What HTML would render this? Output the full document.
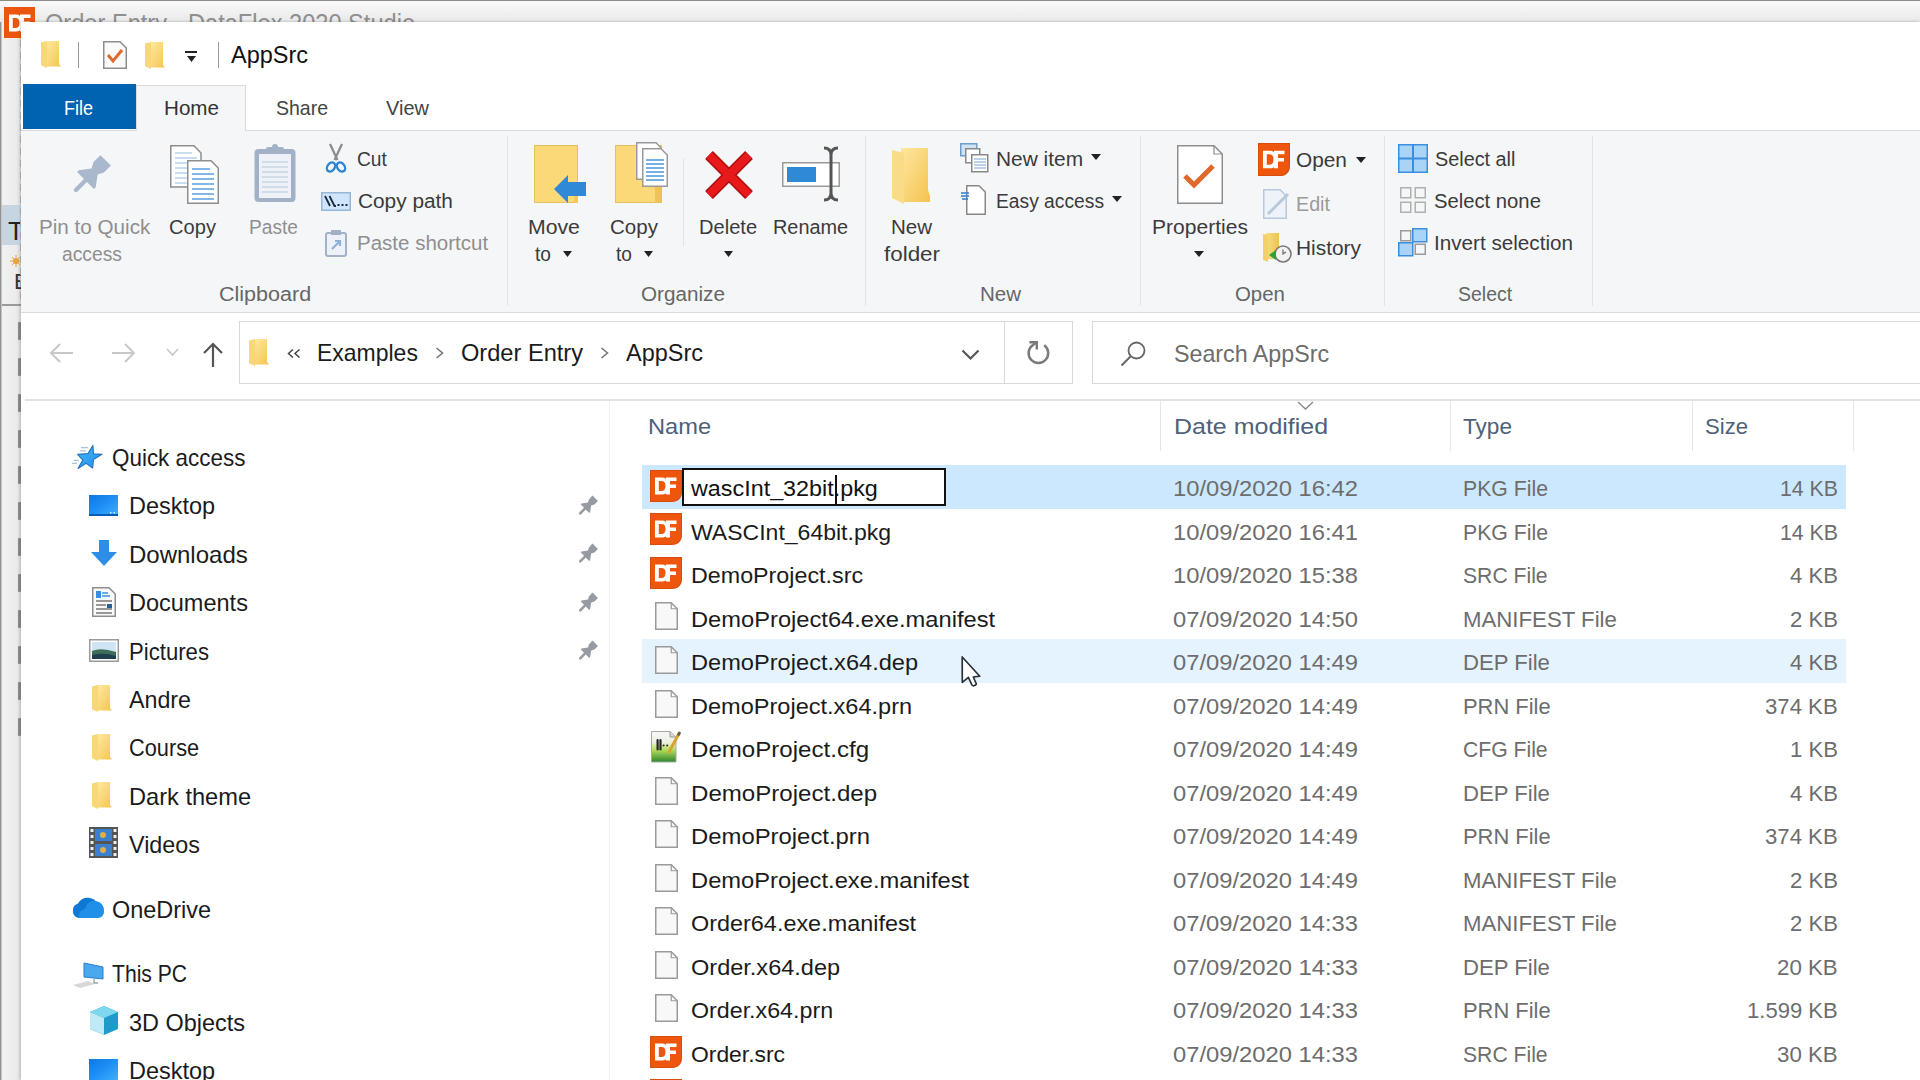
<!DOCTYPE html>
<html><head><meta charset="utf-8"><title>AppSrc</title>
<style>
html,body{margin:0;padding:0;width:1920px;height:1080px;overflow:hidden;background:#fff}
body{position:relative;font-family:"Liberation Sans",sans-serif}
.t{position:absolute;white-space:nowrap;line-height:1;transform-origin:0 0}
svg{overflow:visible}
</style></head><body>
<div style="position:absolute;left:0px;top:0px;width:1920px;height:22px;background:linear-gradient(#fafafa,#e9e9e9);border-top:1px solid #8c8c8c;box-sizing:border-box"></div>
<div class="t" style="left:45.00px;top:9.90px;font-size:26px;color:#8f8f8f;transform:scaleX(0.9080);">Order Entry - DataFlex 2020 Studio</div>
<div style="position:absolute;left:0px;top:22px;width:21px;height:1058px;background:linear-gradient(90deg,#8a8a8a 0,#9a9a9a 1px,#f1f1f3 2px,#ececec 16px,#dcdcdc 20px)"></div>
<svg style="position:absolute;left:4px;top:7px" width="31" height="31" viewBox="0 0 31 31"><rect width="31" height="31" fill="#ec550f"/><path d="M5 7.5 H12 Q16.5 7.5 17 11 V21 Q16.5 24.5 12 24.5 H5 Z M8.8 11 V21 H11.5 Q15.5 21 15.5 16 Q15.5 11 11.5 11 Z" fill="#fff" fill-rule="evenodd"/><path d="M16 7.5 H26.5 V11 H20 V14.5 H26 V18 H20 V24.5 H16 Z" fill="#fff"/></svg>
<div style="position:absolute;left:2px;top:205px;width:19px;height:40px;background:#c7d5e2"></div>
<div class="t" style="left:8.00px;top:217.90px;font-size:26px;color:#222;">T</div>
<svg style="position:absolute;left:10px;top:255px" width="11" height="12" viewBox="0 0 11 12"><circle cx="6" cy="6" r="3" fill="#e8a23a"/><path d="M6 0V12M0 6H12M2 2L10 10M10 2L2 10" stroke="#e8a23a" stroke-width="1"/></svg>
<div class="t" style="left:14.00px;top:271.30px;font-size:22px;color:#333;">E</div>
<div style="position:absolute;left:2px;top:304px;width:19px;height:2px;background:#9a9a9a"></div>
<div style="position:absolute;left:20px;top:40px;width:1px;height:7px;background:#b8b8b8"></div>
<div style="position:absolute;left:20px;top:52px;width:1px;height:7px;background:#b8b8b8"></div>
<div style="position:absolute;left:20px;top:64px;width:1px;height:7px;background:#b8b8b8"></div>
<div style="position:absolute;left:20px;top:76px;width:1px;height:7px;background:#b8b8b8"></div>
<div style="position:absolute;left:20px;top:88px;width:1px;height:7px;background:#b8b8b8"></div>
<div style="position:absolute;left:20px;top:100px;width:1px;height:7px;background:#b8b8b8"></div>
<div style="position:absolute;left:20px;top:112px;width:1px;height:7px;background:#b8b8b8"></div>
<div style="position:absolute;left:20px;top:124px;width:1px;height:7px;background:#b8b8b8"></div>
<div style="position:absolute;left:20px;top:136px;width:1px;height:7px;background:#b8b8b8"></div>
<div style="position:absolute;left:20px;top:148px;width:1px;height:7px;background:#b8b8b8"></div>
<div style="position:absolute;left:20px;top:160px;width:1px;height:7px;background:#b8b8b8"></div>
<div style="position:absolute;left:20px;top:172px;width:1px;height:7px;background:#b8b8b8"></div>
<div style="position:absolute;left:20px;top:184px;width:1px;height:7px;background:#b8b8b8"></div>
<div style="position:absolute;left:20px;top:196px;width:1px;height:7px;background:#b8b8b8"></div>
<div style="position:absolute;left:20px;top:208px;width:1px;height:7px;background:#b8b8b8"></div>
<div style="position:absolute;left:20px;top:220px;width:1px;height:7px;background:#b8b8b8"></div>
<div style="position:absolute;left:20px;top:232px;width:1px;height:7px;background:#b8b8b8"></div>
<div style="position:absolute;left:20px;top:244px;width:1px;height:7px;background:#b8b8b8"></div>
<div style="position:absolute;left:20px;top:256px;width:1px;height:7px;background:#b8b8b8"></div>
<div style="position:absolute;left:20px;top:268px;width:1px;height:7px;background:#b8b8b8"></div>
<div style="position:absolute;left:20px;top:280px;width:1px;height:7px;background:#b8b8b8"></div>
<div style="position:absolute;left:20px;top:292px;width:1px;height:7px;background:#b8b8b8"></div>
<div style="position:absolute;left:18px;top:322px;width:3px;height:18px;background:#8a8a8a;border-radius:1px"></div>
<div style="position:absolute;left:18px;top:358px;width:3px;height:18px;background:#8a8a8a;border-radius:1px"></div>
<div style="position:absolute;left:18px;top:394px;width:3px;height:18px;background:#8a8a8a;border-radius:1px"></div>
<div style="position:absolute;left:18px;top:430px;width:3px;height:18px;background:#8a8a8a;border-radius:1px"></div>
<div style="position:absolute;left:18px;top:466px;width:3px;height:18px;background:#8a8a8a;border-radius:1px"></div>
<div style="position:absolute;left:18px;top:502px;width:3px;height:18px;background:#8a8a8a;border-radius:1px"></div>
<div style="position:absolute;left:18px;top:538px;width:3px;height:18px;background:#8a8a8a;border-radius:1px"></div>
<div style="position:absolute;left:18px;top:574px;width:3px;height:18px;background:#8a8a8a;border-radius:1px"></div>
<div style="position:absolute;left:18px;top:610px;width:3px;height:18px;background:#8a8a8a;border-radius:1px"></div>
<div style="position:absolute;left:18px;top:646px;width:3px;height:18px;background:#8a8a8a;border-radius:1px"></div>
<div style="position:absolute;left:18px;top:682px;width:3px;height:18px;background:#8a8a8a;border-radius:1px"></div>
<div style="position:absolute;left:18px;top:718px;width:3px;height:18px;background:#8a8a8a;border-radius:1px"></div>
<div style="position:absolute;left:21px;top:22px;width:1899px;height:1058px;background:#fff;box-shadow:-1px -1px 2px rgba(0,0,0,0.15)"></div>
<svg style="position:absolute;left:41px;top:41px" width="20" height="27" viewBox="0 0 20 27"><defs><linearGradient id="fg41_41" x1="0" y1="0" x2="1" y2="1"><stop offset="0" stop-color="#ffe9a0"/><stop offset="1" stop-color="#f4c450"/></linearGradient></defs>
<path d="M5.0 0 H18.0 V22.9 L20.0 25.6 H5.0 Z" fill="url(#fg41_41)"/>
<path d="M0 1.4 L6.0 0 V27.0 L0 24.3 Z" fill="#f7d77a"/></svg>
<div style="position:absolute;left:78px;top:42px;width:1px;height:26px;background:#9a9a9a"></div>
<svg style="position:absolute;left:103px;top:41px" width="24" height="28" viewBox="0 0 24 28"><path d="M0.75 0.75 H17 L23.25 7 V27.25 H0.75 Z" fill="#fafafa" stroke="#8d8d8d" stroke-width="1.5"/><path d="M5 14 L10 20 L19 9" fill="none" stroke="#e0682c" stroke-width="3"/></svg>
<svg style="position:absolute;left:145px;top:42px" width="20" height="27" viewBox="0 0 20 27"><defs><linearGradient id="fg145_42" x1="0" y1="0" x2="1" y2="1"><stop offset="0" stop-color="#ffe9a0"/><stop offset="1" stop-color="#f4c450"/></linearGradient></defs>
<path d="M5.0 0 H18.0 V22.9 L20.0 25.6 H5.0 Z" fill="url(#fg145_42)"/>
<path d="M0 1.4 L6.0 0 V27.0 L0 24.3 Z" fill="#f7d77a"/></svg>
<div style="position:absolute;left:185px;top:51px;width:12px;height:2px;background:#222"></div>
<svg style="position:absolute;left:187px;top:56px" width="9" height="6" viewBox="0 0 9 6"><path d="M0 0 H9 L4.5 6 Z" fill="#222"/></svg>
<div style="position:absolute;left:218px;top:42px;width:1px;height:26px;background:#9a9a9a"></div>
<div class="t" style="left:231.00px;top:43.10px;font-size:24px;color:#111;transform:scaleX(0.9778);">AppSrc</div>
<div style="position:absolute;left:21px;top:130px;width:1899px;height:1px;background:#dadbdc"></div>
<div style="position:absolute;left:23px;top:84px;width:113px;height:45px;background:#0063b1"></div>
<div class="t" style="left:64.00px;top:97.15px;font-size:21px;color:#ffffff;transform:scaleX(0.8593);">File</div>
<div style="position:absolute;left:136px;top:85px;width:110px;height:46px;background:#f5f6f7;border:1px solid #dadbdc;border-bottom:none;box-sizing:border-box"></div>
<div class="t" style="left:164.00px;top:97.15px;font-size:21px;color:#333;transform:scaleX(0.9821);">Home</div>
<div class="t" style="left:276.00px;top:97.15px;font-size:21px;color:#444;transform:scaleX(0.9286);">Share</div>
<div class="t" style="left:386.00px;top:97.15px;font-size:21px;color:#444;transform:scaleX(0.9503);">View</div>
<div style="position:absolute;left:21px;top:131px;width:1899px;height:181px;background:#f5f6f7"></div>
<div style="position:absolute;left:21px;top:312px;width:1899px;height:1px;background:#dadbdc"></div>
<div style="position:absolute;left:507px;top:136px;width:1px;height:170px;background:#e2e3e4"></div>
<div style="position:absolute;left:865px;top:136px;width:1px;height:170px;background:#e2e3e4"></div>
<div style="position:absolute;left:1140px;top:136px;width:1px;height:170px;background:#e2e3e4"></div>
<div style="position:absolute;left:1384px;top:136px;width:1px;height:170px;background:#e2e3e4"></div>
<div style="position:absolute;left:1592px;top:136px;width:1px;height:170px;background:#e2e3e4"></div>
<div style="position:absolute;left:683px;top:158px;width:1px;height:88px;background:#e2e3e4"></div>
<div class="t" style="left:219.00px;top:284.00px;font-size:20px;color:#666666;transform:scaleX(1.0760);">Clipboard</div>
<div class="t" style="left:641.00px;top:284.00px;font-size:20px;color:#666666;transform:scaleX(1.0338);">Organize</div>
<div class="t" style="left:980.00px;top:284.00px;font-size:20px;color:#666666;transform:scaleX(1.0250);">New</div>
<div class="t" style="left:1235.00px;top:284.00px;font-size:20px;color:#666666;transform:scaleX(1.0204);">Open</div>
<div class="t" style="left:1458.00px;top:284.00px;font-size:20px;color:#666666;transform:scaleX(0.9730);">Select</div>
<svg style="position:absolute;left:72px;top:152px" width="44" height="44" viewBox="0 0 44 44"><g transform="scale(1.95)"><g transform="translate(17.25 4.3) rotate(45) translate(-10 0)"><path d="M6.2 0 H13.8 V5 L12.2 8 L16.1 13.3 V14.6 H3.9 V13.3 L7.8 8 L6.2 5 Z" fill="#a9b8cc"/><rect x="8.9" y="13" width="2.2" height="9.6" rx="1.1" fill="#a9b8cc"/></g></g></svg>
<div class="t" style="left:38.50px;top:217.00px;font-size:20px;color:#8f8f8f;transform:scaleX(1.0324);">Pin to Quick</div>
<div class="t" style="left:62.00px;top:244.00px;font-size:20px;color:#8f8f8f;transform:scaleX(0.9639);">access</div>
<svg style="position:absolute;left:170px;top:145px" width="49" height="59" viewBox="0 0 49 59"><path d="M0.75 0.75 H24 L31 8 V42 H0.75 Z" fill="#fff" stroke="#8e8e8e" stroke-width="1.5"/>
<g stroke="#b7d2ec" stroke-width="1.6"><path d="M5 8H22M5 13H27M5 18H27M5 23H27M5 28H27M5 33H27M5 38H27"/></g>
<path d="M17.75 15.75 H41 L48.25 23 V58.25 H17.75 Z" fill="#fff" stroke="#8e8e8e" stroke-width="1.5"/>
<g stroke="#5a9fe0" stroke-width="1.7"><path d="M22 24H40M22 29H44M22 34H44M22 39H44M22 44H44M22 49H44M22 54H44"/></g></svg>
<div class="t" style="left:169.00px;top:217.00px;font-size:20px;color:#3b3b3b;transform:scaleX(1.0053);">Copy</div>
<svg style="position:absolute;left:253px;top:144px" width="44" height="60" viewBox="0 0 44 60"><rect x="1.5" y="5" width="41" height="53" rx="4" fill="#a3b1c6"/><rect x="6" y="10" width="32" height="44" fill="#eef2f8"/>
<g stroke="#c9d3e2" stroke-width="1.5"><path d="M9 18H35M9 23H35M9 28H35M9 33H35M9 38H35M9 43H35M9 48H35"/></g>
<rect x="13" y="3" width="18" height="7" rx="2" fill="#a3b1c6"/><circle cx="22" cy="3" r="3" fill="#a3b1c6"/></svg>
<div class="t" style="left:249.00px;top:217.00px;font-size:20px;color:#8f8f8f;transform:scaleX(0.9561);">Paste</div>
<svg style="position:absolute;left:325px;top:144px" width="22" height="30" viewBox="0 0 22 30"><path d="M5 0 L12.5 16 M17 0 L9.5 16" stroke="#8a8a8a" stroke-width="2.2"/><ellipse cx="6" cy="23" rx="3.6" ry="5" transform="rotate(35 6 23)" fill="none" stroke="#2f86d6" stroke-width="2.4"/><ellipse cx="16" cy="23" rx="3.6" ry="5" transform="rotate(-35 16 23)" fill="none" stroke="#2f86d6" stroke-width="2.4"/></svg>
<div class="t" style="left:357.00px;top:149.40px;font-size:20px;color:#3b3b3b;transform:scaleX(0.9600);">Cut</div>
<svg style="position:absolute;left:321px;top:192px" width="30" height="19" viewBox="0 0 30 19"><rect x="0.75" y="0.75" width="28.5" height="17.5" fill="#cfe5fb" stroke="#98b6d6" stroke-width="1.5"/><path d="M4 4 L9 14 M8.5 4 L13.5 14 H15" stroke="#1b2a3a" stroke-width="1.8" fill="none"/><g fill="#1b2a3a"><rect x="16.5" y="12" width="2" height="2"/><rect x="20.5" y="12" width="2" height="2"/><rect x="24.5" y="12" width="2" height="2"/></g></svg>
<div class="t" style="left:357.60px;top:191.00px;font-size:20px;color:#3b3b3b;transform:scaleX(1.0411);">Copy path</div>
<svg style="position:absolute;left:325px;top:229px" width="22" height="28" viewBox="0 0 22 28"><rect x="1" y="4" width="20" height="23" rx="2" fill="#eef2f8" stroke="#a3b1c6" stroke-width="2"/><rect x="6" y="1" width="10" height="5" fill="#a3b1c6"/><path d="M7 20 L14 13 M10 12 H15 V17" stroke="#8fb0d8" stroke-width="2.2" fill="none"/></svg>
<div class="t" style="left:357.00px;top:233.00px;font-size:20px;color:#8f8f8f;transform:scaleX(1.0254);">Paste shortcut</div>
<svg style="position:absolute;left:534px;top:145px" width="52" height="60" viewBox="0 0 52 60"><rect x="0.5" y="0.5" width="43" height="57" fill="#fcd978" stroke="#e9c15a"/><rect x="40" y="46" width="4" height="12" fill="#f3c75d"/><path d="M20 44 L34 30 V37 H52 V51 H34 V58 Z" fill="#2f89d6"/></svg>
<div class="t" style="left:528.00px;top:217.00px;font-size:20px;color:#3b3b3b;transform:scaleX(1.0612);">Move</div>
<div class="t" style="left:535.00px;top:244.00px;font-size:20px;color:#3b3b3b;transform:scaleX(0.9552);">to</div>
<svg style="position:absolute;left:563px;top:251px" width="9" height="6" viewBox="0 0 9 6"><path d="M0 0 H9 L4.5 6 Z" fill="#222"/></svg>
<svg style="position:absolute;left:615px;top:142px" width="54" height="62" viewBox="0 0 54 62"><rect x="0.5" y="3.5" width="46" height="57" fill="#fcd978" stroke="#e9c15a"/><path d="M40 30 Q46 28 46 34 V60 H40 Z" fill="#f0c35a"/><path d="M21.75 0.75 H41 L46.25 6 V37.25 H21.75 Z" fill="#fff" stroke="#9a9a9a" stroke-width="1.5"/><path d="M27.75 6.75 H46 L52.25 13 V44.25 H27.75 Z" fill="#fff" stroke="#9a9a9a" stroke-width="1.5"/><g stroke="#4c95da" stroke-width="1.6"><path d="M31 18H49M31 22H49M31 26H49M31 30H49M31 34H49M31 38H49"/></g></svg>
<div class="t" style="left:610.00px;top:217.00px;font-size:20px;color:#3b3b3b;transform:scaleX(1.0267);">Copy</div>
<div class="t" style="left:616.00px;top:244.00px;font-size:20px;color:#3b3b3b;transform:scaleX(0.9552);">to</div>
<svg style="position:absolute;left:644px;top:251px" width="9" height="6" viewBox="0 0 9 6"><path d="M0 0 H9 L4.5 6 Z" fill="#222"/></svg>
<svg style="position:absolute;left:704px;top:150px" width="50" height="50" viewBox="0 0 50 50"><path d="M5 5 L45 45 M45 5 L5 45" stroke="#b01010" stroke-width="11"/><path d="M5 5 L45 45 M45 5 L5 45" stroke="#e8191a" stroke-width="8"/></svg>
<div class="t" style="left:699.00px;top:217.00px;font-size:20px;color:#3b3b3b;transform:scaleX(1.0043);">Delete</div>
<svg style="position:absolute;left:724px;top:251px" width="9" height="6" viewBox="0 0 9 6"><path d="M0 0 H9 L4.5 6 Z" fill="#222"/></svg>
<svg style="position:absolute;left:782px;top:147px" width="59" height="54" viewBox="0 0 59 54"><rect x="0.75" y="15.75" width="56.5" height="23.5" fill="#fff" stroke="#9a9a9a" stroke-width="1.5"/><rect x="5" y="20" width="29" height="15" fill="#2f89d6"/><path d="M42 1 Q49 1 49 8 V46 Q49 53 42 53 M56 1 Q49 1 49 8 V46 Q49 53 56 53" fill="none" stroke="#555" stroke-width="3"/></svg>
<div class="t" style="left:773.00px;top:217.00px;font-size:20px;color:#3b3b3b;transform:scaleX(0.9934);">Rename</div>
<svg style="position:absolute;left:892px;top:148px" width="38" height="56" viewBox="0 0 38 56"><defs><linearGradient id="nf" x1="0" y1="0" x2="1" y2="1"><stop offset="0" stop-color="#ffe7a0"/><stop offset="1" stop-color="#f3c34e"/></linearGradient></defs><path d="M9 0 H36 V42 L38 48 V54 H9 Z" fill="url(#nf)"/><path d="M0 2 L12 5 V56 L0 50 Z" fill="#f8dc88"/></svg>
<div class="t" style="left:891.00px;top:217.00px;font-size:20px;color:#3b3b3b;transform:scaleX(1.0250);">New</div>
<div class="t" style="left:884.00px;top:244.00px;font-size:20px;color:#3b3b3b;transform:scaleX(1.1200);">folder</div>
<svg style="position:absolute;left:960px;top:143px" width="29" height="30" viewBox="0 0 29 30"><rect x="0.75" y="0.75" width="16" height="12" fill="#cfe3f5" stroke="#6f9ccb" stroke-width="1.5"/><rect x="5.75" y="5.75" width="14" height="14" fill="#fff" stroke="#888" stroke-width="1.5"/><rect x="11.75" y="11.75" width="16" height="17" fill="#fff" stroke="#888" stroke-width="1.5"/><g stroke="#7aa4cf" stroke-width="1.2"><path d="M14 16H26M14 19H26M14 22H26M14 25H26"/></g></svg>
<div class="t" style="left:996.00px;top:149.00px;font-size:20px;color:#3b3b3b;transform:scaleX(1.0450);">New item</div>
<svg style="position:absolute;left:1091px;top:154px" width="10" height="6" viewBox="0 0 10 6"><path d="M0 0 H10 L5.0 6 Z" fill="#222"/></svg>
<svg style="position:absolute;left:960px;top:185px" width="26" height="30" viewBox="0 0 26 30"><path d="M6.75 0.75 H19 L25.25 7 V29.25 H6.75 Z" fill="#fff" stroke="#888" stroke-width="1.5"/><g stroke="#2b7fd4" stroke-width="1.5"><path d="M1 8H9M1 11H9M2 14H8"/></g></svg>
<div class="t" style="left:996.00px;top:191.00px;font-size:20px;color:#3b3b3b;transform:scaleX(0.9621);">Easy access</div>
<svg style="position:absolute;left:1112px;top:196px" width="10" height="6" viewBox="0 0 10 6"><path d="M0 0 H10 L5.0 6 Z" fill="#222"/></svg>
<svg style="position:absolute;left:1177px;top:145px" width="46" height="59" viewBox="0 0 46 59"><path d="M0.75 0.75 H37 L45.25 9 V58.25 H0.75 Z" fill="#fff" stroke="#8e8e8e" stroke-width="1.5"/><path d="M37 0.75 V9 H45.25" fill="none" stroke="#8e8e8e" stroke-width="1.2"/><path d="M8 31 L17 40 L36 21" fill="none" stroke="#e0682c" stroke-width="5"/></svg>
<div class="t" style="left:1152.00px;top:217.00px;font-size:20px;color:#3b3b3b;transform:scaleX(1.0521);">Properties</div>
<svg style="position:absolute;left:1194px;top:251px" width="10" height="6" viewBox="0 0 10 6"><path d="M0 0 H10 L5.0 6 Z" fill="#222"/></svg>
<svg style="position:absolute;left:1258px;top:143px" width="32" height="33" viewBox="0 0 32 33"><g transform="scale(1.0000 1.0312)"><path d="M0 0 H32 V21 Q32 32 21 32 H0 Z" fill="#ef560d"/><path d="M0.5 0.5 H31.5 V21 Q31.5 31.5 21 31.5 H0.5 Z" fill="none" stroke="#c8480e" stroke-width="1" opacity="0.6"/><path d="M5 7.5 H12 Q16.5 7.5 17 11 V21 Q16.5 24.5 12 24.5 H5 Z M8.8 11 V21 H11.5 Q15.5 21 15.5 16 Q15.5 11 11.5 11 Z" fill="#fff" fill-rule="evenodd"/><path d="M16 7.5 H26.5 V11 H20 V14.5 H26 V18 H20 V24.5 H16 Z" fill="#fff"/></g></svg>
<div class="t" style="left:1296.00px;top:150.00px;font-size:20px;color:#3b3b3b;transform:scaleX(1.0408);">Open</div>
<svg style="position:absolute;left:1356px;top:157px" width="10" height="6" viewBox="0 0 10 6"><path d="M0 0 H10 L5.0 6 Z" fill="#222"/></svg>
<svg style="position:absolute;left:1263px;top:189px" width="28" height="30" viewBox="0 0 28 30"><path d="M0.75 0.75 H17 L23.25 7 V29.25 H0.75 Z" fill="#eef3fa" stroke="#b8c8dc" stroke-width="1.5"/><path d="M5 25 L25 5" stroke="#b8c8dc" stroke-width="3"/></svg>
<div class="t" style="left:1296.00px;top:194.00px;font-size:20px;color:#9a9a9a;transform:scaleX(0.9855);">Edit</div>
<svg style="position:absolute;left:1263px;top:233px" width="30" height="30" viewBox="0 0 30 30"><defs><linearGradient id="hg" x1="0" y1="0" x2="1" y2="0"><stop offset="0" stop-color="#f7dc82"/><stop offset="1" stop-color="#eebf45"/></linearGradient></defs><path d="M3 0 H16 V20 L18 26 H3 Z" fill="url(#hg)"/><path d="M0 1 L5 2 V29 L0 27 Z" fill="#f3d06a"/><circle cx="20" cy="21" r="8" fill="#f2f2f2" stroke="#7a7a7a" stroke-width="1.6"/><path d="M20 16.5 V21 L23 19" stroke="#666" stroke-width="1.2" fill="none"/><path d="M6 22 L13 17 V27 Z" fill="#2aa23a"/></svg>
<div class="t" style="left:1296.00px;top:238.00px;font-size:20px;color:#3b3b3b;transform:scaleX(1.0442);">History</div>
<svg style="position:absolute;left:1398px;top:144px" width="30" height="29" viewBox="0 0 30 29"><rect x="0.75" y="0.75" width="28.5" height="27.5" fill="#a9d4f7" stroke="#3a8ee0" stroke-width="1.5"/><path d="M15 0 V29 M0 14.5 H30" stroke="#3a8ee0" stroke-width="2"/></svg>
<div class="t" style="left:1434.60px;top:149.00px;font-size:20px;color:#3b3b3b;transform:scaleX(0.9908);">Select all</div>
<svg style="position:absolute;left:1400px;top:187px" width="27" height="27" viewBox="0 0 27 27"><g fill="none" stroke="#b0b0b0" stroke-width="1.5"><rect x="0.75" y="0.75" width="10" height="10"/><rect x="15.25" y="0.75" width="10" height="10"/><rect x="0.75" y="15.25" width="10" height="10"/><rect x="15.25" y="15.25" width="10" height="10"/></g></svg>
<div class="t" style="left:1434.00px;top:191.00px;font-size:20px;color:#3b3b3b;transform:scaleX(1.0118);">Select none</div>
<svg style="position:absolute;left:1398px;top:228px" width="30" height="29" viewBox="0 0 30 29"><g fill="none" stroke="#9a9a9a" stroke-width="1.5"><rect x="2.75" y="2.75" width="10" height="10"/><rect x="17.25" y="16.25" width="10" height="10"/></g><rect x="14.75" y="0.75" width="14" height="13" fill="#a9d4f7" stroke="#3a8ee0" stroke-width="1.5"/><rect x="0.75" y="14.75" width="14" height="13" fill="#a9d4f7" stroke="#3a8ee0" stroke-width="1.5"/></svg>
<div class="t" style="left:1434.00px;top:233.00px;font-size:20px;color:#3b3b3b;transform:scaleX(1.0335);">Invert selection</div>
<svg style="position:absolute;left:49px;top:343px" width="25" height="20" viewBox="0 0 25 20"><path d="M24 10 H2 M11 1 L2 10 L11 19" fill="none" stroke="#c8c8c8" stroke-width="2"/></svg>
<svg style="position:absolute;left:111px;top:343px" width="25" height="20" viewBox="0 0 25 20"><path d="M1 10 H23 M14 1 L23 10 L14 19" fill="none" stroke="#c8c8c8" stroke-width="2"/></svg>
<svg style="position:absolute;left:166px;top:348px" width="13" height="9" viewBox="0 0 13 9"><path d="M1 1 L6.5 7 L12 1" fill="none" stroke="#c8c8c8" stroke-width="1.6"/></svg>
<svg style="position:absolute;left:203px;top:342px" width="20" height="26" viewBox="0 0 20 26"><path d="M10 25 V2 M1 11 L10 2 L19 11" fill="none" stroke="#555" stroke-width="2.2"/></svg>
<div style="position:absolute;left:239px;top:321px;width:834px;height:63px;border:1px solid #d9d9d9;box-sizing:border-box;background:#fff"></div>
<div style="position:absolute;left:1004px;top:322px;width:1px;height:61px;background:#d9d9d9"></div>
<svg style="position:absolute;left:249px;top:339px" width="20" height="27" viewBox="0 0 20 27"><defs><linearGradient id="fg249_339" x1="0" y1="0" x2="1" y2="1"><stop offset="0" stop-color="#ffe9a0"/><stop offset="1" stop-color="#f4c450"/></linearGradient></defs>
<path d="M5.0 0 H18.0 V22.9 L20.0 25.6 H5.0 Z" fill="url(#fg249_339)"/>
<path d="M0 1.4 L6.0 0 V27.0 L0 24.3 Z" fill="#f7d77a"/></svg>
<svg style="position:absolute;left:287px;top:349px" width="14" height="9" viewBox="0 0 14 9"><path d="M6 0.5 L1.5 4.5 L6 8.5 M12.5 0.5 L8 4.5 L12.5 8.5" fill="none" stroke="#444" stroke-width="1.5"/></svg>
<div class="t" style="left:317.00px;top:340.85px;font-size:24px;color:#1b1b1b;transform:scaleX(0.9573);">Examples</div>
<svg style="position:absolute;left:435px;top:347px" width="10" height="12" viewBox="0 0 10 12"><path d="M1.5 1 L7.5 6 L1.5 11" fill="none" stroke="#777" stroke-width="1.6"/></svg>
<div class="t" style="left:461.00px;top:340.85px;font-size:24px;color:#1b1b1b;transform:scaleX(0.9839);">Order Entry</div>
<svg style="position:absolute;left:600px;top:347px" width="10" height="12" viewBox="0 0 10 12"><path d="M1.5 1 L7.5 6 L1.5 11" fill="none" stroke="#777" stroke-width="1.6"/></svg>
<div class="t" style="left:626.00px;top:340.85px;font-size:24px;color:#1b1b1b;transform:scaleX(0.9778);">AppSrc</div>
<svg style="position:absolute;left:961px;top:349px" width="19" height="11" viewBox="0 0 19 11"><path d="M1.5 1.5 L9.5 9.5 L17.5 1.5" fill="none" stroke="#555" stroke-width="2.2"/></svg>
<svg style="position:absolute;left:1026px;top:341px" width="26" height="25" viewBox="0 0 26 25"><path d="M18.2 4.3 A9.8 9.8 0 1 1 6.6 4.3 L10 1.8" fill="none" stroke="#7a7a7a" stroke-width="2.5"/><path d="M3.4 1.3 H10.8 V8.6" fill="none" stroke="#7a7a7a" stroke-width="2.4"/></svg>
<div style="position:absolute;left:1092px;top:321px;width:900px;height:63px;border:1px solid #d9d9d9;box-sizing:border-box;background:#fff"></div>
<svg style="position:absolute;left:1120px;top:340px" width="27" height="27" viewBox="0 0 27 27"><circle cx="16.5" cy="10.5" r="8" fill="none" stroke="#666" stroke-width="1.8"/><path d="M10.5 16.5 L1.5 25.5" stroke="#666" stroke-width="2"/></svg>
<div class="t" style="left:1174.00px;top:341.60px;font-size:24px;color:#6d6d6d;transform:scaleX(0.9688);">Search AppSrc</div>
<div style="position:absolute;left:25px;top:399px;width:1895px;height:2px;background:#e3e3e3"></div>
<div style="position:absolute;left:609px;top:401px;width:1px;height:679px;background:#f2f2f2"></div>
<svg style="position:absolute;left:66px;top:440px" width="40" height="32" viewBox="0 0 40 32"><defs><linearGradient id="stg" x1="0" y1="0" x2="1" y2="1"><stop offset="0" stop-color="#4ab3f7"/><stop offset="1" stop-color="#1b93f0"/></linearGradient></defs><path d="M15 7.6 H22 M14 10.9 H20 M8 20.4 H13 M6 23.3 H11" stroke="#a9c4d8" stroke-width="1.2"/><path d="M26.9 5.5 L27.5 13.9 L36 14.3 L27.5 19.4 L26.6 27.9 L20.1 23.3 L12 28.5 L16.8 20.1 L11.7 14.3 L22 13.6 Z" fill="url(#stg)" stroke="#2a76bd" stroke-width="1.2" stroke-linejoin="round"/></svg>
<div class="t" style="left:112.00px;top:445.60px;font-size:24px;color:#1b1b1b;transform:scaleX(0.9345);">Quick access</div>
<svg style="position:absolute;left:89px;top:495px" width="30" height="22" viewBox="0 0 30 22"><defs><linearGradient id="dkg" x1="0" y1="0" x2="1" y2="1"><stop offset="0" stop-color="#0f78e0"/><stop offset="0.5" stop-color="#1e90f5"/><stop offset="1" stop-color="#3fb0ff"/></linearGradient></defs><rect x="0" y="0" width="29" height="21" fill="url(#dkg)"/><rect x="0" y="19" width="29" height="2" fill="#0a5cb8"/><rect x="21" y="17" width="1.5" height="1.5" fill="#cfe8ff"/><rect x="24.5" y="17" width="1.5" height="1.5" fill="#cfe8ff"/></svg>
<div class="t" style="left:129.00px;top:494.20px;font-size:24px;color:#1b1b1b;transform:scaleX(0.9773);">Desktop</div>
<svg style="position:absolute;left:90px;top:540px" width="28" height="27" viewBox="0 0 28 27"><path d="M9 0 H19 V12 H27 L14 26 L1 12 H9 Z" fill="#2d8ee8"/></svg>
<div class="t" style="left:129.00px;top:542.60px;font-size:24px;color:#1b1b1b;">Downloads</div>
<svg style="position:absolute;left:92px;top:587px" width="24" height="30" viewBox="0 0 24 30"><path d="M0.75 0.75 H17 L23.25 7 V29.25 H0.75 Z" fill="#fafafa" stroke="#8e8e8e" stroke-width="1.5"/><g stroke="#777" stroke-width="1.3"><path d="M4 14H20M4 18H14M4 22H20M4 26H20"/></g><rect x="4" y="4" width="5" height="7" fill="#3a8ee0"/><path d="M10 6H16M10 9H18" stroke="#3a8ee0" stroke-width="1.3"/><rect x="15" y="17" width="5" height="4" fill="#2a5c99"/></svg>
<div class="t" style="left:129.00px;top:591.10px;font-size:24px;color:#1b1b1b;transform:scaleX(0.9794);">Documents</div>
<svg style="position:absolute;left:89px;top:639px" width="30" height="23" viewBox="0 0 30 23"><rect x="0.75" y="0.75" width="28.5" height="21.5" fill="#fff" stroke="#9a9a9a" stroke-width="1.5"/><rect x="3" y="3" width="24" height="17" fill="#cfe4f5"/><path d="M3 12 Q12 8 27 13 V20 H3 Z" fill="#3c6e5a"/><path d="M3 16 Q15 13 27 17 V20 H3Z" fill="#1f3f4f"/></svg>
<div class="t" style="left:129.00px;top:639.60px;font-size:24px;color:#1b1b1b;transform:scaleX(0.9222);">Pictures</div>
<svg style="position:absolute;left:92px;top:685px" width="20" height="27" viewBox="0 0 20 27"><defs><linearGradient id="fg92_685" x1="0" y1="0" x2="1" y2="1"><stop offset="0" stop-color="#ffe9a0"/><stop offset="1" stop-color="#f4c450"/></linearGradient></defs>
<path d="M5.0 0 H18.0 V22.9 L20.0 25.6 H5.0 Z" fill="url(#fg92_685)"/>
<path d="M0 1.4 L6.0 0 V27.0 L0 24.3 Z" fill="#f7d77a"/></svg>
<svg style="position:absolute;left:92px;top:733.5px" width="20" height="27" viewBox="0 0 20 27"><defs><linearGradient id="fg92_733.5" x1="0" y1="0" x2="1" y2="1"><stop offset="0" stop-color="#ffe9a0"/><stop offset="1" stop-color="#f4c450"/></linearGradient></defs>
<path d="M5.0 0 H18.0 V22.9 L20.0 25.6 H5.0 Z" fill="url(#fg92_733.5)"/>
<path d="M0 1.4 L6.0 0 V27.0 L0 24.3 Z" fill="#f7d77a"/></svg>
<svg style="position:absolute;left:92px;top:782px" width="20" height="27" viewBox="0 0 20 27"><defs><linearGradient id="fg92_782" x1="0" y1="0" x2="1" y2="1"><stop offset="0" stop-color="#ffe9a0"/><stop offset="1" stop-color="#f4c450"/></linearGradient></defs>
<path d="M5.0 0 H18.0 V22.9 L20.0 25.6 H5.0 Z" fill="url(#fg92_782)"/>
<path d="M0 1.4 L6.0 0 V27.0 L0 24.3 Z" fill="#f7d77a"/></svg>
<div class="t" style="left:129.00px;top:687.60px;font-size:24px;color:#1b1b1b;transform:scaleX(0.9688);">Andre</div>
<div class="t" style="left:129.00px;top:736.10px;font-size:24px;color:#1b1b1b;transform:scaleX(0.9061);">Course</div>
<div class="t" style="left:129.00px;top:784.60px;font-size:24px;color:#1b1b1b;transform:scaleX(0.9839);">Dark theme</div>
<svg style="position:absolute;left:89px;top:827px" width="30" height="32" viewBox="0 0 30 32"><rect x="0" y="0" width="29" height="31" fill="#555"/><g fill="#eee"><rect x="1.5" y="2" width="3" height="3"/><rect x="1.5" y="8" width="3" height="3"/><rect x="1.5" y="14" width="3" height="3"/><rect x="1.5" y="20" width="3" height="3"/><rect x="1.5" y="26" width="3" height="3"/><rect x="24.5" y="2" width="3" height="3"/><rect x="24.5" y="8" width="3" height="3"/><rect x="24.5" y="14" width="3" height="3"/><rect x="24.5" y="20" width="3" height="3"/><rect x="24.5" y="26" width="3" height="3"/></g><rect x="6" y="2" width="17" height="12" fill="#3a7fd0"/><rect x="6" y="17" width="17" height="12" fill="#3a7fd0"/><circle cx="14" cy="8" r="3" fill="#e0b040"/><circle cx="14" cy="23" r="3" fill="#e0b040"/></svg>
<div class="t" style="left:129.00px;top:833.10px;font-size:24px;color:#1b1b1b;transform:scaleX(0.9726);">Videos</div>
<svg style="position:absolute;left:71px;top:896px" width="34" height="23" viewBox="0 0 34 23"><path d="M8 22 A7.5 7.5 0 0 1 7 7.5 A11 11 0 0 1 27 9 A7 7 0 0 1 26 22 Z" fill="#0f78d4"/><path d="M8 22 A7 7 0 0 1 14 13 A9 9 0 0 1 33 16 A6 6 0 0 1 27 22 Z" fill="#1f8fe8"/></svg>
<div class="t" style="left:112.00px;top:897.60px;font-size:24px;color:#1b1b1b;transform:scaleX(0.9778);">OneDrive</div>
<svg style="position:absolute;left:72px;top:961px" width="33" height="28" viewBox="0 0 33 28"><path d="M12 2 L31 6 V18 L12 16 Z" fill="#4aa8ef" stroke="#2a7fd0" stroke-width="1"/><path d="M1 24 L16 20 L23 23 L8 27 Z" fill="#d8d8d8"/><path d="M22 18 V22 H26" stroke="#9aa" stroke-width="1.5" fill="none"/></svg>
<div class="t" style="left:112.00px;top:961.60px;font-size:24px;color:#1b1b1b;transform:scaleX(0.8798);">This PC</div>
<svg style="position:absolute;left:89px;top:1006px" width="30" height="30" viewBox="0 0 30 30"><path d="M15 0 L29 6 V23 L15 29 L1 23 V6 Z" fill="#1e9bc9"/><path d="M15 0 L29 6 L15 12 L1 6 Z" fill="#7fd6ef"/><path d="M1 6 L15 12 V29 L1 23 Z" fill="#bfe9f5"/></svg>
<div class="t" style="left:129.00px;top:1010.60px;font-size:24px;color:#1b1b1b;transform:scaleX(0.9768);">3D Objects</div>
<svg style="position:absolute;left:89px;top:1059px" width="30" height="22" viewBox="0 0 30 22"><rect x="0" y="0" width="29" height="21" fill="url(#dkg)"/></svg>
<div class="t" style="left:129.00px;top:1058.60px;font-size:24px;color:#1b1b1b;transform:scaleX(0.9773);">Desktop</div>
<svg style="position:absolute;left:578px;top:494px" width="22" height="22" viewBox="0 0 22 22"><g transform="translate(17.25 4.3) rotate(45) translate(-10 0)"><path d="M6.2 0 H13.8 V5 L12.2 8 L16.1 13.3 V14.6 H3.9 V13.3 L7.8 8 L6.2 5 Z" fill="#969ba3"/><rect x="8.7" y="13" width="2.6" height="9.6" rx="1.3" fill="#969ba3"/></g></svg>
<svg style="position:absolute;left:578px;top:542.4px" width="22" height="22" viewBox="0 0 22 22"><g transform="translate(17.25 4.3) rotate(45) translate(-10 0)"><path d="M6.2 0 H13.8 V5 L12.2 8 L16.1 13.3 V14.6 H3.9 V13.3 L7.8 8 L6.2 5 Z" fill="#969ba3"/><rect x="8.7" y="13" width="2.6" height="9.6" rx="1.3" fill="#969ba3"/></g></svg>
<svg style="position:absolute;left:578px;top:590.8px" width="22" height="22" viewBox="0 0 22 22"><g transform="translate(17.25 4.3) rotate(45) translate(-10 0)"><path d="M6.2 0 H13.8 V5 L12.2 8 L16.1 13.3 V14.6 H3.9 V13.3 L7.8 8 L6.2 5 Z" fill="#969ba3"/><rect x="8.7" y="13" width="2.6" height="9.6" rx="1.3" fill="#969ba3"/></g></svg>
<svg style="position:absolute;left:578px;top:639.2px" width="22" height="22" viewBox="0 0 22 22"><g transform="translate(17.25 4.3) rotate(45) translate(-10 0)"><path d="M6.2 0 H13.8 V5 L12.2 8 L16.1 13.3 V14.6 H3.9 V13.3 L7.8 8 L6.2 5 Z" fill="#969ba3"/><rect x="8.7" y="13" width="2.6" height="9.6" rx="1.3" fill="#969ba3"/></g></svg>
<div class="t" style="left:648.00px;top:415.88px;font-size:22.5px;color:#4f6178;transform:scaleX(1.0500);">Name</div>
<div style="position:absolute;left:1160px;top:401px;width:1px;height:50px;background:#e5e5e5"></div>
<div style="position:absolute;left:1450px;top:401px;width:1px;height:50px;background:#e5e5e5"></div>
<div style="position:absolute;left:1692px;top:401px;width:1px;height:50px;background:#e5e5e5"></div>
<div style="position:absolute;left:1853px;top:401px;width:1px;height:50px;background:#e5e5e5"></div>
<svg style="position:absolute;left:1297px;top:401px" width="17" height="9" viewBox="0 0 17 9"><path d="M1 1 L8.5 8 L16 1" fill="none" stroke="#888" stroke-width="1.3"/></svg>
<div class="t" style="left:1174.00px;top:415.88px;font-size:22.5px;color:#4f6178;transform:scaleX(1.1099);">Date modified</div>
<div class="t" style="left:1463.00px;top:415.88px;font-size:22.5px;color:#4f6178;transform:scaleX(1.0051);">Type</div>
<div class="t" style="left:1705.00px;top:415.88px;font-size:22.5px;color:#4f6178;transform:scaleX(0.9829);">Size</div>
<div style="position:absolute;left:642px;top:465px;width:1204px;height:44px;background:#cce8ff"></div>
<svg style="position:absolute;left:650px;top:469.7px" width="32" height="32" viewBox="0 0 32 32"><g transform="scale(1.0000 1.0000)"><path d="M0 0 H32 V21 Q32 32 21 32 H0 Z" fill="#ef560d"/><path d="M0.5 0.5 H31.5 V21 Q31.5 31.5 21 31.5 H0.5 Z" fill="none" stroke="#c8480e" stroke-width="1" opacity="0.6"/><path d="M5 7.5 H12 Q16.5 7.5 17 11 V21 Q16.5 24.5 12 24.5 H5 Z M8.8 11 V21 H11.5 Q15.5 21 15.5 16 Q15.5 11 11.5 11 Z" fill="#fff" fill-rule="evenodd"/><path d="M16 7.5 H26.5 V11 H20 V14.5 H26 V18 H20 V24.5 H16 Z" fill="#fff"/></g></svg>
<div style="position:absolute;left:682px;top:468px;width:264px;height:38px;background:#fff;border:2px solid #111;box-sizing:border-box"></div>
<div class="t" style="left:691.26px;top:477.88px;font-size:22.5px;color:#111;transform:scaleX(1.0374);">wascInt_32bit.pkg</div>
<div style="position:absolute;left:835px;top:475px;width:1.5px;height:30px;background:#111"></div>
<div class="t" style="left:1173.00px;top:477.88px;font-size:22.5px;color:#6d6d6d;transform:scaleX(1.0556);">10/09/2020 16:42</div>
<div class="t" style="left:1463.00px;top:477.88px;font-size:22.5px;color:#6d6d6d;transform:scaleX(0.9444);">PKG File</div>
<div class="t" style="left:1780.00px;top:477.88px;font-size:22.5px;color:#6d6d6d;transform:scaleX(0.9469);">14 KB</div>
<svg style="position:absolute;left:650px;top:513.24px" width="32" height="32" viewBox="0 0 32 32"><g transform="scale(1.0000 1.0000)"><path d="M0 0 H32 V21 Q32 32 21 32 H0 Z" fill="#ef560d"/><path d="M0.5 0.5 H31.5 V21 Q31.5 31.5 21 31.5 H0.5 Z" fill="none" stroke="#c8480e" stroke-width="1" opacity="0.6"/><path d="M5 7.5 H12 Q16.5 7.5 17 11 V21 Q16.5 24.5 12 24.5 H5 Z M8.8 11 V21 H11.5 Q15.5 21 15.5 16 Q15.5 11 11.5 11 Z" fill="#fff" fill-rule="evenodd"/><path d="M16 7.5 H26.5 V11 H20 V14.5 H26 V18 H20 V24.5 H16 Z" fill="#fff"/></g></svg>
<div class="t" style="left:691.00px;top:521.88px;font-size:22.5px;color:#1b1b1b;transform:scaleX(1.0230);">WASCInt_64bit.pkg</div>
<div class="t" style="left:1173.00px;top:521.88px;font-size:22.5px;color:#6d6d6d;transform:scaleX(1.0556);">10/09/2020 16:41</div>
<div class="t" style="left:1463.00px;top:521.88px;font-size:22.5px;color:#6d6d6d;transform:scaleX(0.9444);">PKG File</div>
<div class="t" style="left:1780.00px;top:521.88px;font-size:22.5px;color:#6d6d6d;transform:scaleX(0.9469);">14 KB</div>
<svg style="position:absolute;left:650px;top:556.7800000000001px" width="32" height="32" viewBox="0 0 32 32"><g transform="scale(1.0000 1.0000)"><path d="M0 0 H32 V21 Q32 32 21 32 H0 Z" fill="#ef560d"/><path d="M0.5 0.5 H31.5 V21 Q31.5 31.5 21 31.5 H0.5 Z" fill="none" stroke="#c8480e" stroke-width="1" opacity="0.6"/><path d="M5 7.5 H12 Q16.5 7.5 17 11 V21 Q16.5 24.5 12 24.5 H5 Z M8.8 11 V21 H11.5 Q15.5 21 15.5 16 Q15.5 11 11.5 11 Z" fill="#fff" fill-rule="evenodd"/><path d="M16 7.5 H26.5 V11 H20 V14.5 H26 V18 H20 V24.5 H16 Z" fill="#fff"/></g></svg>
<div class="t" style="left:691.00px;top:564.88px;font-size:22.5px;color:#1b1b1b;transform:scaleX(1.0346);">DemoProject.src</div>
<div class="t" style="left:1173.00px;top:564.88px;font-size:22.5px;color:#6d6d6d;transform:scaleX(1.0556);">10/09/2020 15:38</div>
<div class="t" style="left:1463.00px;top:564.88px;font-size:22.5px;color:#6d6d6d;transform:scaleX(0.9400);">SRC File</div>
<div class="t" style="left:1790.10px;top:564.88px;font-size:22.5px;color:#6d6d6d;transform:scaleX(0.9826);">4 KB</div>
<svg style="position:absolute;left:655px;top:602.42px" width="23" height="28" viewBox="0 0 23 28"><path d="M0.75 0.75 H16.25 L22.25 6.75 V27.25 H0.75 Z" fill="#f8f8f8" stroke="#9a9a9a" stroke-width="1.5"/><path d="M16.25 0.75 V6.75 H22.25" fill="none" stroke="#9a9a9a" stroke-width="1.2"/></svg>
<div class="t" style="left:691.00px;top:608.88px;font-size:22.5px;color:#1b1b1b;transform:scaleX(1.0528);">DemoProject64.exe.manifest</div>
<div class="t" style="left:1173.00px;top:608.88px;font-size:22.5px;color:#6d6d6d;transform:scaleX(1.0556);">07/09/2020 14:50</div>
<div class="t" style="left:1463.00px;top:608.88px;font-size:22.5px;color:#6d6d6d;transform:scaleX(0.9875);">MANIFEST File</div>
<div class="t" style="left:1790.10px;top:608.88px;font-size:22.5px;color:#6d6d6d;transform:scaleX(0.9826);">2 KB</div>
<div style="position:absolute;left:642px;top:639px;width:1204px;height:44px;background:#e5f3ff"></div>
<svg style="position:absolute;left:655px;top:645.9599999999999px" width="23" height="28" viewBox="0 0 23 28"><path d="M0.75 0.75 H16.25 L22.25 6.75 V27.25 H0.75 Z" fill="#f8f8f8" stroke="#9a9a9a" stroke-width="1.5"/><path d="M16.25 0.75 V6.75 H22.25" fill="none" stroke="#9a9a9a" stroke-width="1.2"/></svg>
<div class="t" style="left:691.00px;top:651.88px;font-size:22.5px;color:#1b1b1b;transform:scaleX(1.0497);">DemoProject.x64.dep</div>
<div class="t" style="left:1173.00px;top:651.88px;font-size:22.5px;color:#6d6d6d;transform:scaleX(1.0556);">07/09/2020 14:49</div>
<div class="t" style="left:1463.00px;top:651.88px;font-size:22.5px;color:#6d6d6d;transform:scaleX(0.9836);">DEP File</div>
<div class="t" style="left:1790.10px;top:651.88px;font-size:22.5px;color:#6d6d6d;transform:scaleX(0.9826);">4 KB</div>
<svg style="position:absolute;left:655px;top:689.5px" width="23" height="28" viewBox="0 0 23 28"><path d="M0.75 0.75 H16.25 L22.25 6.75 V27.25 H0.75 Z" fill="#f8f8f8" stroke="#9a9a9a" stroke-width="1.5"/><path d="M16.25 0.75 V6.75 H22.25" fill="none" stroke="#9a9a9a" stroke-width="1.2"/></svg>
<div class="t" style="left:691.00px;top:695.88px;font-size:22.5px;color:#1b1b1b;transform:scaleX(1.0462);">DemoProject.x64.prn</div>
<div class="t" style="left:1173.00px;top:695.88px;font-size:22.5px;color:#6d6d6d;transform:scaleX(1.0556);">07/09/2020 14:49</div>
<div class="t" style="left:1463.00px;top:695.88px;font-size:22.5px;color:#6d6d6d;transform:scaleX(0.9733);">PRN File</div>
<div class="t" style="left:1765.40px;top:695.88px;font-size:22.5px;color:#6d6d6d;transform:scaleX(0.9844);">374 KB</div>
<svg style="position:absolute;left:651px;top:731px" width="31" height="32" viewBox="0 0 31 32"><defs><linearGradient id="cg" x1="0" y1="0" x2="0" y2="1"><stop offset="0" stop-color="#f6f7f8"/><stop offset="0.35" stop-color="#eef2e2"/><stop offset="0.6" stop-color="#b5df5e"/><stop offset="1" stop-color="#2c862a"/></linearGradient></defs><path d="M0.5 0.5 H19 L25 6 V31 H0.5 Z" fill="url(#cg)" stroke="#a8a8a8" stroke-width="1"/><path d="M19 0.5 V6 H25" fill="#d5d5d5" stroke="#9a9a9a" stroke-width="1"/><g fill="#262626"><rect x="5.5" y="8" width="2.2" height="11.5" rx="1.1"/><rect x="8.4" y="8" width="2.2" height="11.5" rx="1.1"/><circle cx="12.6" cy="14.5" r="1"/><circle cx="16.2" cy="14.5" r="1"/></g><path d="M17.5 22 L28.3 2" stroke="#d6a52c" stroke-width="3"/><path d="M27 4.5 L29 1" stroke="#6a5a4a" stroke-width="2.6"/></svg>
<div class="t" style="left:691.00px;top:738.88px;font-size:22.5px;color:#1b1b1b;transform:scaleX(1.0707);">DemoProject.cfg</div>
<div class="t" style="left:1173.00px;top:738.88px;font-size:22.5px;color:#6d6d6d;transform:scaleX(1.0556);">07/09/2020 14:49</div>
<div class="t" style="left:1463.00px;top:738.88px;font-size:22.5px;color:#6d6d6d;transform:scaleX(0.9400);">CFG File</div>
<div class="t" style="left:1790.10px;top:738.88px;font-size:22.5px;color:#6d6d6d;transform:scaleX(0.9826);">1 KB</div>
<svg style="position:absolute;left:655px;top:776.5799999999999px" width="23" height="28" viewBox="0 0 23 28"><path d="M0.75 0.75 H16.25 L22.25 6.75 V27.25 H0.75 Z" fill="#f8f8f8" stroke="#9a9a9a" stroke-width="1.5"/><path d="M16.25 0.75 V6.75 H22.25" fill="none" stroke="#9a9a9a" stroke-width="1.2"/></svg>
<div class="t" style="left:691.00px;top:782.88px;font-size:22.5px;color:#1b1b1b;transform:scaleX(1.0705);">DemoProject.dep</div>
<div class="t" style="left:1173.00px;top:782.88px;font-size:22.5px;color:#6d6d6d;transform:scaleX(1.0556);">07/09/2020 14:49</div>
<div class="t" style="left:1463.00px;top:782.88px;font-size:22.5px;color:#6d6d6d;transform:scaleX(0.9836);">DEP File</div>
<div class="t" style="left:1790.10px;top:782.88px;font-size:22.5px;color:#6d6d6d;transform:scaleX(0.9826);">4 KB</div>
<svg style="position:absolute;left:655px;top:820.1199999999999px" width="23" height="28" viewBox="0 0 23 28"><path d="M0.75 0.75 H16.25 L22.25 6.75 V27.25 H0.75 Z" fill="#f8f8f8" stroke="#9a9a9a" stroke-width="1.5"/><path d="M16.25 0.75 V6.75 H22.25" fill="none" stroke="#9a9a9a" stroke-width="1.2"/></svg>
<div class="t" style="left:691.00px;top:825.88px;font-size:22.5px;color:#1b1b1b;transform:scaleX(1.0607);">DemoProject.prn</div>
<div class="t" style="left:1173.00px;top:825.88px;font-size:22.5px;color:#6d6d6d;transform:scaleX(1.0556);">07/09/2020 14:49</div>
<div class="t" style="left:1463.00px;top:825.88px;font-size:22.5px;color:#6d6d6d;transform:scaleX(0.9733);">PRN File</div>
<div class="t" style="left:1765.40px;top:825.88px;font-size:22.5px;color:#6d6d6d;transform:scaleX(0.9844);">374 KB</div>
<svg style="position:absolute;left:655px;top:863.66px" width="23" height="28" viewBox="0 0 23 28"><path d="M0.75 0.75 H16.25 L22.25 6.75 V27.25 H0.75 Z" fill="#f8f8f8" stroke="#9a9a9a" stroke-width="1.5"/><path d="M16.25 0.75 V6.75 H22.25" fill="none" stroke="#9a9a9a" stroke-width="1.2"/></svg>
<div class="t" style="left:691.00px;top:869.88px;font-size:22.5px;color:#1b1b1b;transform:scaleX(1.0540);">DemoProject.exe.manifest</div>
<div class="t" style="left:1173.00px;top:869.88px;font-size:22.5px;color:#6d6d6d;transform:scaleX(1.0556);">07/09/2020 14:49</div>
<div class="t" style="left:1463.00px;top:869.88px;font-size:22.5px;color:#6d6d6d;transform:scaleX(0.9875);">MANIFEST File</div>
<div class="t" style="left:1790.10px;top:869.88px;font-size:22.5px;color:#6d6d6d;transform:scaleX(0.9826);">2 KB</div>
<svg style="position:absolute;left:655px;top:907.1999999999999px" width="23" height="28" viewBox="0 0 23 28"><path d="M0.75 0.75 H16.25 L22.25 6.75 V27.25 H0.75 Z" fill="#f8f8f8" stroke="#9a9a9a" stroke-width="1.5"/><path d="M16.25 0.75 V6.75 H22.25" fill="none" stroke="#9a9a9a" stroke-width="1.2"/></svg>
<div class="t" style="left:691.00px;top:912.88px;font-size:22.5px;color:#1b1b1b;transform:scaleX(1.0405);">Order64.exe.manifest</div>
<div class="t" style="left:1173.00px;top:912.88px;font-size:22.5px;color:#6d6d6d;transform:scaleX(1.0556);">07/09/2020 14:33</div>
<div class="t" style="left:1463.00px;top:912.88px;font-size:22.5px;color:#6d6d6d;transform:scaleX(0.9875);">MANIFEST File</div>
<div class="t" style="left:1790.10px;top:912.88px;font-size:22.5px;color:#6d6d6d;transform:scaleX(0.9826);">2 KB</div>
<svg style="position:absolute;left:655px;top:950.74px" width="23" height="28" viewBox="0 0 23 28"><path d="M0.75 0.75 H16.25 L22.25 6.75 V27.25 H0.75 Z" fill="#f8f8f8" stroke="#9a9a9a" stroke-width="1.5"/><path d="M16.25 0.75 V6.75 H22.25" fill="none" stroke="#9a9a9a" stroke-width="1.2"/></svg>
<div class="t" style="left:691.00px;top:956.88px;font-size:22.5px;color:#1b1b1b;transform:scaleX(1.0456);">Order.x64.dep</div>
<div class="t" style="left:1173.00px;top:956.88px;font-size:22.5px;color:#6d6d6d;transform:scaleX(1.0556);">07/09/2020 14:33</div>
<div class="t" style="left:1463.00px;top:956.88px;font-size:22.5px;color:#6d6d6d;transform:scaleX(0.9836);">DEP File</div>
<div class="t" style="left:1777.30px;top:956.88px;font-size:22.5px;color:#6d6d6d;transform:scaleX(0.9910);">20 KB</div>
<svg style="position:absolute;left:655px;top:994.28px" width="23" height="28" viewBox="0 0 23 28"><path d="M0.75 0.75 H16.25 L22.25 6.75 V27.25 H0.75 Z" fill="#f8f8f8" stroke="#9a9a9a" stroke-width="1.5"/><path d="M16.25 0.75 V6.75 H22.25" fill="none" stroke="#9a9a9a" stroke-width="1.2"/></svg>
<div class="t" style="left:691.00px;top:999.88px;font-size:22.5px;color:#1b1b1b;transform:scaleX(1.0327);">Order.x64.prn</div>
<div class="t" style="left:1173.00px;top:999.88px;font-size:22.5px;color:#6d6d6d;transform:scaleX(1.0556);">07/09/2020 14:33</div>
<div class="t" style="left:1463.00px;top:999.88px;font-size:22.5px;color:#6d6d6d;transform:scaleX(0.9733);">PRN File</div>
<div class="t" style="left:1747.40px;top:999.88px;font-size:22.5px;color:#6d6d6d;transform:scaleX(0.9795);">1.599 KB</div>
<svg style="position:absolute;left:650px;top:1035.72px" width="32" height="32" viewBox="0 0 32 32"><g transform="scale(1.0000 1.0000)"><path d="M0 0 H32 V21 Q32 32 21 32 H0 Z" fill="#ef560d"/><path d="M0.5 0.5 H31.5 V21 Q31.5 31.5 21 31.5 H0.5 Z" fill="none" stroke="#c8480e" stroke-width="1" opacity="0.6"/><path d="M5 7.5 H12 Q16.5 7.5 17 11 V21 Q16.5 24.5 12 24.5 H5 Z M8.8 11 V21 H11.5 Q15.5 21 15.5 16 Q15.5 11 11.5 11 Z" fill="#fff" fill-rule="evenodd"/><path d="M16 7.5 H26.5 V11 H20 V14.5 H26 V18 H20 V24.5 H16 Z" fill="#fff"/></g></svg>
<div class="t" style="left:691.00px;top:1043.88px;font-size:22.5px;color:#1b1b1b;transform:scaleX(1.0162);">Order.src</div>
<div class="t" style="left:1173.00px;top:1043.88px;font-size:22.5px;color:#6d6d6d;transform:scaleX(1.0556);">07/09/2020 14:33</div>
<div class="t" style="left:1463.00px;top:1043.88px;font-size:22.5px;color:#6d6d6d;transform:scaleX(0.9400);">SRC File</div>
<div class="t" style="left:1777.30px;top:1043.88px;font-size:22.5px;color:#6d6d6d;transform:scaleX(0.9910);">30 KB</div>
<svg style="position:absolute;left:650px;top:1079.26px" width="32" height="32" viewBox="0 0 32 32"><g transform="scale(1.0000 1.0000)"><path d="M0 0 H32 V21 Q32 32 21 32 H0 Z" fill="#ef560d"/><path d="M0.5 0.5 H31.5 V21 Q31.5 31.5 21 31.5 H0.5 Z" fill="none" stroke="#c8480e" stroke-width="1" opacity="0.6"/><path d="M5 7.5 H12 Q16.5 7.5 17 11 V21 Q16.5 24.5 12 24.5 H5 Z M8.8 11 V21 H11.5 Q15.5 21 15.5 16 Q15.5 11 11.5 11 Z" fill="#fff" fill-rule="evenodd"/><path d="M16 7.5 H26.5 V11 H20 V14.5 H26 V18 H20 V24.5 H16 Z" fill="#fff"/></g></svg>
<div class="t" style="left:691.00px;top:1087.88px;font-size:22.5px;color:#1b1b1b;transform:scaleX(0.7407);">Order.x64.src</div>
<svg style="position:absolute;left:960px;top:656px" width="22" height="32" viewBox="0 0 22 32"><path d="M2.2 1 L2.3 26.3 L8.4 21.4 L11.9 29 Q14 31 16.4 28 L13.3 21 L19.8 20.2 Z" fill="#fff" stroke="#2a3038" stroke-width="1.7" stroke-linejoin="round"/></svg>
</body></html>
